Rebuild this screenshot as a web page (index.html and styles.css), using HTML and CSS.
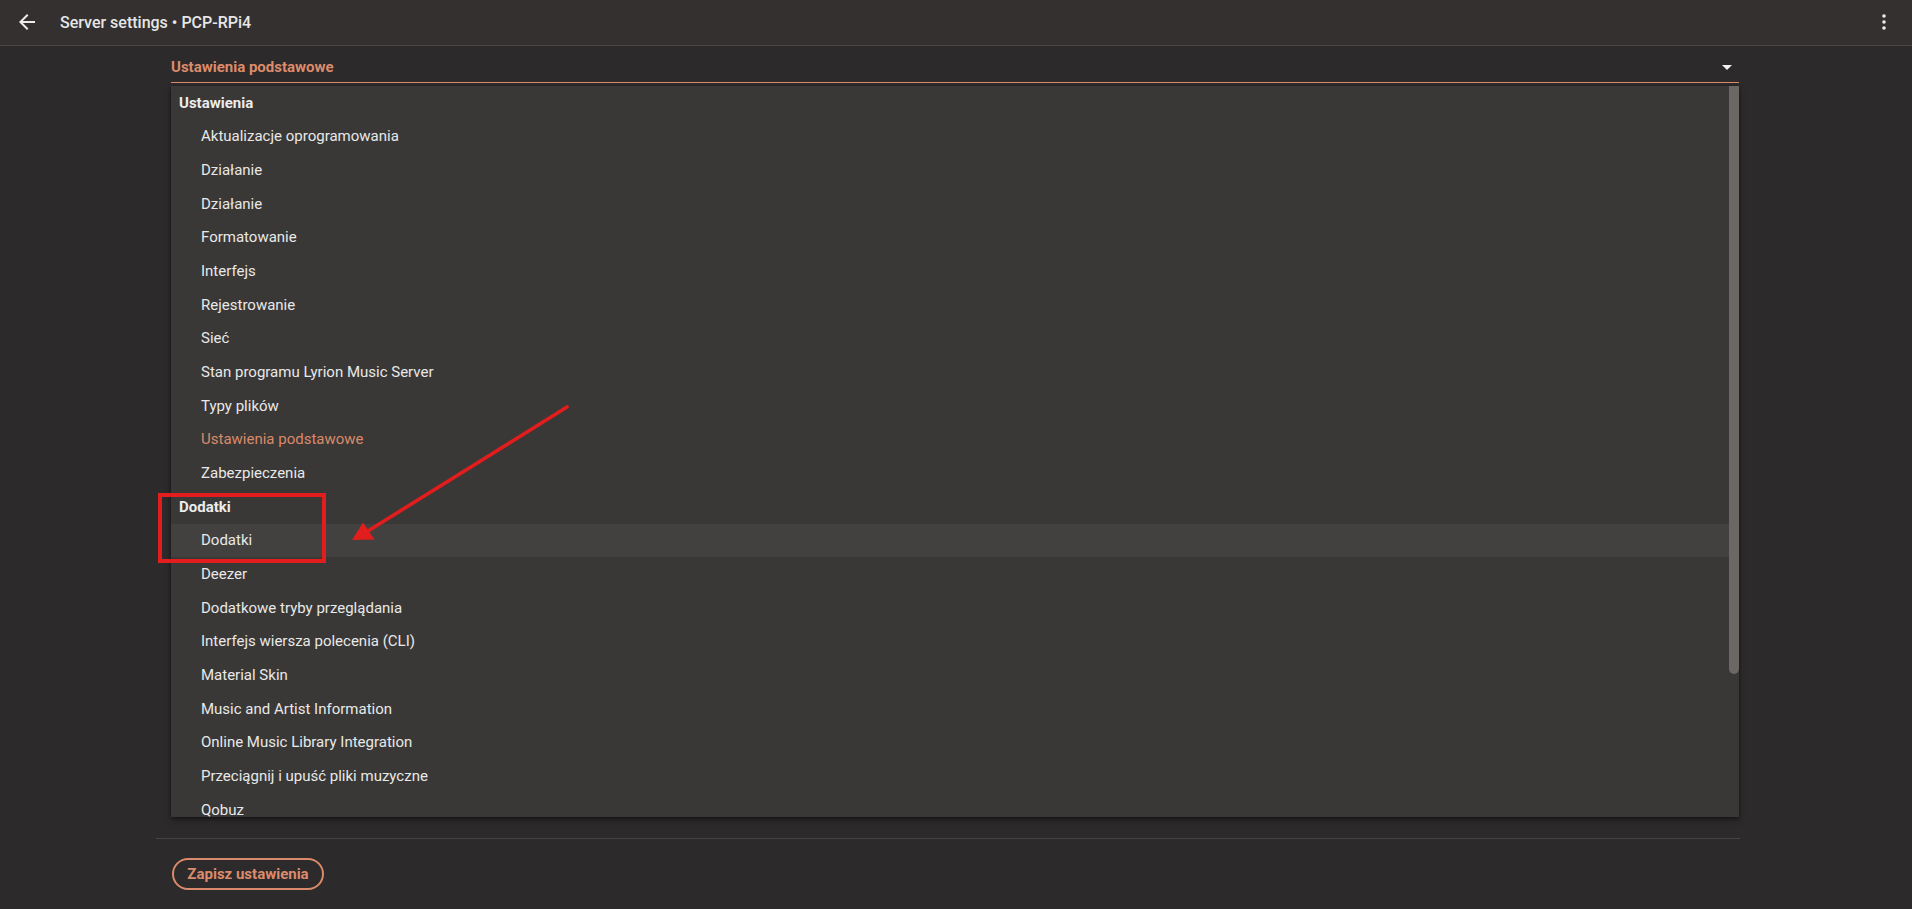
FILE: index.html
```html
<!DOCTYPE html>
<html lang="pl">
<head>
<meta charset="utf-8">
<title>Server settings • PCP-RPi4</title>
<link rel="stylesheet" href="styles.css">
</head>
<body>
<header class="toolbar">
  <span class="icon-btn back">
    <svg viewBox="0 0 24 24"><path d="M20 11H7.83l5.59-5.59L12 4l-8 8 8 8 1.41-1.41L7.83 13H20v-2z"/></svg>
  </span>
  <div class="title">Server settings • PCP-RPi4</div>
  <div class="spacer"></div>
  <span class="icon-btn more">
    <svg viewBox="0 0 24 24"><circle cx="12" cy="6" r="1.8"/><circle cx="12" cy="12" r="1.8"/><circle cx="12" cy="18" r="1.8"/></svg>
  </span>
</header>

<main class="content">
  <div class="select">
    <span class="select-value">Ustawienia podstawowe</span>
    <svg class="drop" viewBox="0 0 24 24"><path d="M7 10l5 5 5-5z"/></svg>
  </div>

  <div class="menu">
    <ul class="list">
      <li class="header">Ustawienia</li>
      <li class="item">Aktualizacje oprogramowania</li>
      <li class="item">Działanie</li>
      <li class="item">Działanie</li>
      <li class="item">Formatowanie</li>
      <li class="item">Interfejs</li>
      <li class="item">Rejestrowanie</li>
      <li class="item">Sieć</li>
      <li class="item">Stan programu Lyrion Music Server</li>
      <li class="item">Typy plików</li>
      <li class="item selected">Ustawienia podstawowe</li>
      <li class="item">Zabezpieczenia</li>
      <li class="header">Dodatki</li>
      <li class="item hover">Dodatki</li>
      <li class="item">Deezer</li>
      <li class="item">Dodatkowe tryby przeglądania</li>
      <li class="item">Interfejs wiersza polecenia (CLI)</li>
      <li class="item">Material Skin</li>
      <li class="item">Music and Artist Information</li>
      <li class="item">Online Music Library Integration</li>
      <li class="item">Przeciągnij i upuść pliki muzyczne</li>
      <li class="item">Qobuz</li>
    </ul>
    <div class="thumb"></div>
  </div>

  <div class="footer">
    <button class="save">Zapisz ustawienia</button>
  </div>
</main>

<svg class="annot" viewBox="0 0 1912 909" width="1912" height="909">
  <rect x="160" y="495" width="164" height="66" fill="none" stroke="#e11d1d" stroke-width="4"/>
  <line x1="567" y1="407" x2="368" y2="531" stroke="#e11d1d" stroke-width="3.6" stroke-linecap="round"/>
  <polygon points="352,540 363,522.5 374.5,539.5" fill="#e11d1d"/>
</svg>
</body>
</html>
```

FILE: styles.css
```css
* { box-sizing: border-box; }

html, body {
  margin: 0;
  padding: 0;
  background: #2c2a2a;
  color: #e8e8e8;
  font-family: Roboto, "Liberation Sans", Arial, sans-serif;
  width: 1912px;
  height: 909px;
  overflow: hidden;
}

.toolbar {
  height: 46px;
  display: flex;
  align-items: center;
  background: #33302f;
  border-bottom: 1px solid #484544;
  padding: 0 16px 1px 15px;
}

.icon-btn {
  width: 24px;
  height: 24px;
  display: block;
}
.icon-btn svg {
  width: 24px;
  height: 24px;
  fill: #ececec;
  display: block;
}

.title {
  margin-left: 21px;
  font-size: 16px;
  font-weight: 500;
  color: #e6e6e6;
}

.spacer { flex: 1; }

.content {
  margin-left: 156px;
  width: 1584px;
}

.select {
  margin-left: 15px;
  width: 1568px;
  height: 37px;
  display: flex;
  align-items: flex-end;
  justify-content: space-between;
  border-bottom: 1px solid #d98a6b;
  padding-bottom: 5px;
}

.select-value {
  font-size: 15px;
  font-weight: 700;
  color: #dc8c6c;
  line-height: 20px;
}

.drop {
  width: 24px;
  height: 24px;
  fill: #f2f2f2;
  margin-bottom: -2px;
}

.menu {
  position: relative;
  margin-left: 15px;
  margin-top: 3px;
  width: 1568px;
  height: 731px;
  background: #3a3836;
  overflow: hidden;
  box-shadow: 0 3px 6px rgba(0,0,0,0.35), 0 1px 3px rgba(0,0,0,0.3);
}

.list {
  list-style: none;
  margin: 0;
  padding: 0;
}

.list li {
  height: 33.66px;
  display: flex;
  align-items: center;
  font-size: 15px;
  white-space: nowrap;
}

.header {
  padding-left: 8px;
  font-weight: 700;
  color: #ececec;
}

.item {
  padding-left: 30px;
  color: #e8e8e8;
}

.item.selected { color: #d98a6b; }

.item.hover { background: #434140; }

.thumb {
  position: absolute;
  top: 0;
  right: 0;
  width: 10px;
  height: 588px;
  border-radius: 0 0 5px 5px;
  background: #6a6765;
}

.footer {
  margin-top: 21px;
  border-top: 1px solid #454342;
  padding: 19px 0 0 16px;
}

.save {
  height: 32px;
  width: 152px;
  border: 2px solid #d98a6b;
  border-radius: 16px;
  background: transparent;
  color: #dc8c6c;
  font-family: Roboto, "Liberation Sans", Arial, sans-serif;
  font-size: 15px;
  font-weight: 700;
  padding: 0;
}

.annot {
  position: absolute;
  left: 0;
  top: 0;
  pointer-events: none;
}
```
